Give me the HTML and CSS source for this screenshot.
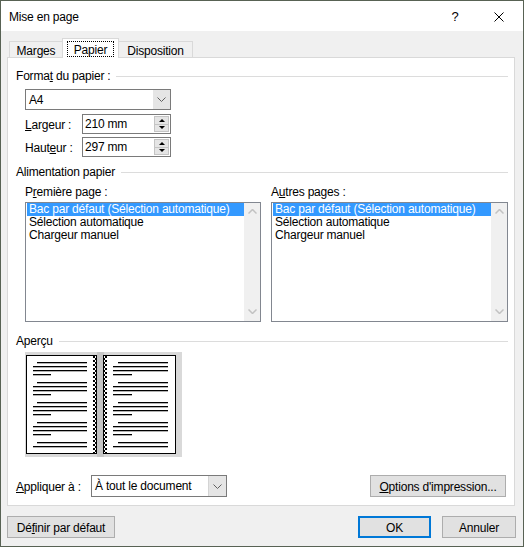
FILE: index.html
```html
<!DOCTYPE html>
<html lang="fr">
<head>
<meta charset="utf-8">
<title>Mise en page</title>
<link rel="stylesheet" href="styles.css">
</head>
<body>
<div class="window">
  <div class="titlebar">
    <span class="title">Mise en page</span>
    <span class="help">?</span>
    <svg class="close" width="10" height="10" viewBox="0 0 10 10"><path d="M0.5 0.5 L9.5 9.5 M9.5 0.5 L0.5 9.5" stroke="#000" stroke-width="1" fill="none"/></svg>
  </div>
  <div class="client">
    <div class="tabs">
      <div class="tab tab-first">Marges</div>
      <div class="tab tab-active"><span class="focus">Papier</span></div>
      <div class="tab tab-last">Disposition</div>
    </div>
    <div class="panel">
      <div class="group-title"><span>Forma<u>t</u> du papier :</span><i class="rule"></i></div>
      <div class="combo combo-size">
        <span class="combo-text">A4</span>
        <span class="combo-btn"><svg width="9" height="5" viewBox="0 0 9 5"><path d="M0.5 0.5 L4.5 4.5 L8.5 0.5" stroke="#606060" fill="none"/></svg></span>
      </div>
      <div class="field field-first">
        <span class="field-label"><u>L</u>argeur :</span>
        <div class="spin">
          <span class="spin-text">210 mm</span>
          <span class="spin-btns"><span class="spin-btn"><i class="tri-up"></i></span><span class="spin-btn"><i class="tri-down"></i></span></span>
        </div>
      </div>
      <div class="field field-second">
        <span class="field-label">Haut<u>e</u>ur :</span>
        <div class="spin">
          <span class="spin-text">297 mm</span>
          <span class="spin-btns"><span class="spin-btn"><i class="tri-up"></i></span><span class="spin-btn"><i class="tri-down"></i></span></span>
        </div>
      </div>

      <div class="group-title group-feed"><span>Alimentation papier</span><i class="rule"></i></div>
      <div class="trays">
        <div class="tray">
          <div class="tray-label">P<u>r</u>emière page :</div>
          <div class="listbox">
            <div class="list-items">
              <div class="item sel">Bac par défaut (Sélection automatique)</div>
              <div class="item">Sélection automatique</div>
              <div class="item">Chargeur manuel</div>
            </div>
            <div class="scroll">
              <svg width="9" height="5" viewBox="0 0 9 5"><path d="M0.5 4.5 L4.5 0.5 L8.5 4.5" stroke="#c2c2c2" stroke-width="1.5" fill="none"/></svg>
              <svg width="9" height="5" viewBox="0 0 9 5"><path d="M0.5 0.5 L4.5 4.5 L8.5 0.5" stroke="#c2c2c2" stroke-width="1.5" fill="none"/></svg>
            </div>
          </div>
        </div>
        <div class="tray">
          <div class="tray-label">A<u>u</u>tres pages :</div>
          <div class="listbox">
            <div class="list-items">
              <div class="item sel">Bac par défaut (Sélection automatique)</div>
              <div class="item">Sélection automatique</div>
              <div class="item">Chargeur manuel</div>
            </div>
            <div class="scroll">
              <svg width="9" height="5" viewBox="0 0 9 5"><path d="M0.5 4.5 L4.5 0.5 L8.5 4.5" stroke="#c2c2c2" stroke-width="1.5" fill="none"/></svg>
              <svg width="9" height="5" viewBox="0 0 9 5"><path d="M0.5 0.5 L4.5 4.5 L8.5 0.5" stroke="#c2c2c2" stroke-width="1.5" fill="none"/></svg>
            </div>
          </div>
        </div>
      </div>

      <div class="group-title group-preview"><span>Aperçu</span><i class="rule"></i></div>
      <div class="preview">
        <svg width="157" height="105" viewBox="0 0 157 105">
          <defs>
            <pattern id="chk" width="4" height="4" patternUnits="userSpaceOnUse">
              <rect width="4" height="4" fill="#fff"/>
              <rect x="0" y="0" width="2" height="2" fill="#000"/>
              <rect x="2" y="2" width="2" height="2" fill="#000"/>
            </pattern>
          </defs>
          <rect width="157" height="105" fill="#d9d9d9"/>
          <rect x="72" y="0" width="7" height="105" fill="#c6c6c6"/>
          <rect x="1.5" y="3.5" width="70" height="98" fill="#fff" stroke="#000"/>
          <rect x="78.5" y="3.5" width="72" height="98" fill="#fff" stroke="#000"/>
          <rect x="68" y="4" width="3" height="97" fill="url(#chk)"/>
          <rect x="79" y="4" width="3" height="97" fill="url(#chk)"/>
          <g fill="#000">
            <rect x="12" y="10" width="50" height="1.3"/><rect x="8" y="14" width="54" height="1.3"/><rect x="8" y="18" width="54" height="1.3"/><rect x="8" y="22" width="18" height="1.3"/>
            <rect x="12" y="30" width="50" height="1.3"/><rect x="8" y="34" width="54" height="1.3"/><rect x="8" y="38" width="54" height="1.3"/><rect x="8" y="42" width="18" height="1.3"/>
            <rect x="12" y="50" width="50" height="1.3"/><rect x="8" y="54" width="54" height="1.3"/><rect x="8" y="58" width="54" height="1.3"/><rect x="8" y="62" width="18" height="1.3"/>
            <rect x="12" y="70" width="50" height="1.3"/><rect x="8" y="74" width="54" height="1.3"/><rect x="8" y="78" width="54" height="1.3"/><rect x="8" y="82" width="18" height="1.3"/>
            <rect x="12" y="90" width="50" height="1.3"/><rect x="8" y="94" width="54" height="1.3"/>

            <rect x="93" y="10" width="50" height="1.3"/><rect x="88" y="14" width="55" height="1.3"/><rect x="88" y="18" width="55" height="1.3"/><rect x="88" y="22" width="19" height="1.3"/>
            <rect x="93" y="30" width="50" height="1.3"/><rect x="88" y="34" width="55" height="1.3"/><rect x="88" y="38" width="55" height="1.3"/><rect x="88" y="42" width="19" height="1.3"/>
            <rect x="93" y="50" width="50" height="1.3"/><rect x="88" y="54" width="55" height="1.3"/><rect x="88" y="58" width="55" height="1.3"/><rect x="88" y="62" width="19" height="1.3"/>
            <rect x="93" y="70" width="50" height="1.3"/><rect x="88" y="74" width="55" height="1.3"/><rect x="88" y="78" width="55" height="1.3"/><rect x="88" y="82" width="19" height="1.3"/>
            <rect x="93" y="90" width="50" height="1.3"/><rect x="88" y="94" width="55" height="1.3"/>
          </g>
        </svg>
      </div>

      <div class="apply">
        <span class="apply-label"><u>A</u>ppliquer à :</span>
        <div class="combo combo-apply">
          <span class="combo-text">À tout le document</span>
          <span class="combo-btn"><svg width="9" height="5" viewBox="0 0 9 5"><path d="M0.5 0.5 L4.5 4.5 L8.5 0.5" stroke="#606060" fill="none"/></svg></span>
        </div>
        <div class="btn btn-options"><span><u>O</u>ptions d'impression...</span></div>
      </div>
    </div>
    <div class="buttons">
      <div class="btn btn-define"><span>Dé<u>f</u>inir par défaut</span></div>
      <div class="btn btn-default btn-ok">OK</div>
      <div class="btn btn-cancel">Annuler</div>
    </div>
  </div>
</div>
</body>
</html>
```

FILE: styles.css
```css
* { box-sizing: border-box; }

body {
  margin: 0;
  font-family: "Liberation Sans", Arial, sans-serif;
  font-size: 12px;
  letter-spacing: -0.2px;
  color: #000;
}

u { text-underline-offset: 1px; }

.window {
  width: 524px;
  height: 547px;
  border: 1px solid #586254;
  background: #f0f0f0;
  display: flex;
  flex-direction: column;
}

.titlebar {
  height: 30px;
  flex: none;
  background: #fff;
  display: flex;
  align-items: center;
  padding: 0 19px 0 8px;
}

.title { flex: 1; padding-top: 1px; }

.help {
  width: 12px;
  text-align: center;
  font-size: 13px;
  padding-top: 1px;
}

.close { margin-left: 33px; margin-top: 2px; }

.client {
  flex: 1;
  display: flex;
  flex-direction: column;
  padding: 7px 8px 0 6px;
}

/* tabs */
.tabs {
  display: flex;
  align-items: flex-end;
  height: 19px;
  margin-left: 2px;
  flex: none;
  position: relative;
  z-index: 1;
}

.tab {
  height: 16px;
  border: 1px solid #d9d9d9;
  border-bottom: none;
  background: #f0f0f0;
  display: flex;
  align-items: center;
  justify-content: center;
  padding-top: 3px;
  line-height: 13px;
}

.tab-first { width: 53px; border-right: none; }
.tab-last { width: 74px; border-left: none; }

.tab-active {
  width: 57px;
  height: 20px;
  margin-bottom: -1px;
  background: #fff;
  align-items: flex-start;
  padding-top: 2px;
}

.focus {
  width: 47px;
  height: 16px;
  border: 1px dotted #000;
  display: flex;
  align-items: center;
  justify-content: center;
  line-height: 14px;
  padding-top: 1px;
}

/* panel */
.panel {
  flex: none;
  height: 449px;
  border: 1px solid #d9d9d9;
  background: #fff;
  padding: 10px 6px 8px 8px;
  display: flex;
  flex-direction: column;
}

.group-title {
  display: flex;
  align-items: center;
  height: 15px;
  line-height: 15px;
  white-space: nowrap;
}

.group-title span { padding-top: 1px; }

.group-title .rule {
  flex: 1;
  height: 1px;
  background: #dcdcdc;
  margin-left: 6px;
  margin-top: 1px;
}

.group-feed { margin-top: 7px; }
.group-preview { margin-top: 11px; }

.combo {
  display: flex;
  height: 21px;
  border: 1px solid #7a7a7a;
  background: #fff;
}

.combo-size { width: 146px; margin: 6px 0 0 9px; }

.combo-text {
  flex: 1;
  padding-left: 3px;
  padding-top: 1px;
  line-height: 18px;
  white-space: nowrap;
}

.combo-btn {
  width: 17px;
  background: #e5e5e5;
  display: flex;
  align-items: center;
  justify-content: center;
}

.field {
  display: flex;
  align-items: center;
  height: 20px;
  margin-left: 9px;
}

.field-first { margin-top: 4px; }
.field-second { margin-top: 3px; }

.field-label { width: 57px; padding-top: 1px; }

.spin {
  width: 89px;
  height: 20px;
  border: 1px solid #7a7a7a;
  display: flex;
}

.spin-text {
  flex: 1;
  padding-left: 2px;
  padding-top: 1px;
  line-height: 17px;
}

.spin-btns {
  width: 16px;
  display: flex;
  flex-direction: column;
  padding: 1px 1px 1px 0;
}

.spin-btn {
  flex: 1;
  background: #e5e5e5;
  border: 1px solid #c4c4c4;
  display: flex;
  align-items: center;
  justify-content: center;
}

.spin-btn + .spin-btn { border-top: none; }

.tri-up {
  width: 0; height: 0;
  border-left: 3px solid transparent;
  border-right: 3px solid transparent;
  border-bottom: 3px solid #000;
}

.tri-down {
  width: 0; height: 0;
  border-left: 3px solid transparent;
  border-right: 3px solid transparent;
  border-top: 3px solid #000;
}

/* trays */
.trays {
  display: grid;
  grid-template-columns: 236px 237px;
  column-gap: 10px;
  margin: 5px 0 0 9px;
}

.tray-label { height: 15px; line-height: 15px; padding-top: 1px; }

.listbox {
  margin-top: 3px;
  height: 120px;
  border: 1px solid #828790;
  display: flex;
  background: #fff;
}

.list-items { flex: 1; padding-left: 1px; min-width: 0; }

.item {
  height: 13px;
  line-height: 13px;
  padding-left: 2px;
  white-space: nowrap;
  overflow: hidden;
}

.item.sel { background: #3399ff; color: #fff; }

.scroll {
  width: 16px;
  background: #f0f0f0;
  display: flex;
  flex-direction: column;
  justify-content: space-between;
  align-items: center;
  padding: 6px 0 7px;
}

/* preview */
.preview {
  margin: 4px 0 0 9px;
  width: 157px;
  height: 105px;
}

.preview svg { display: block; }

/* apply row */
.apply {
  margin-top: auto;
  margin-right: 2px;
  display: flex;
  align-items: center;
  height: 22px;
}

.apply-label { width: 75px; padding-top: 1px; }

.combo-apply { width: 136px; height: 22px; }
.combo-apply .combo-text { line-height: 19px; }
.combo-apply .combo-btn { width: 18px; border-left: 1px solid #d4d4d4; }

.btn {
  height: 22px;
  border: 1px solid #adadad;
  background: #e1e1e1;
  display: flex;
  align-items: center;
  justify-content: center;
  white-space: nowrap;
  padding-top: 1px;
}

.btn-options { width: 136px; margin-left: auto; }

.buttons {
  display: flex;
  height: 22px;
  margin-top: 10px;
  margin-right: -1px;
  flex: none;
}

.btn-define { width: 108px; }
.btn-ok { width: 73px; margin-left: auto; }
.btn-cancel { width: 74px; margin-left: 11px; }

.btn-default { border: 2px solid #0078d7; }
```
